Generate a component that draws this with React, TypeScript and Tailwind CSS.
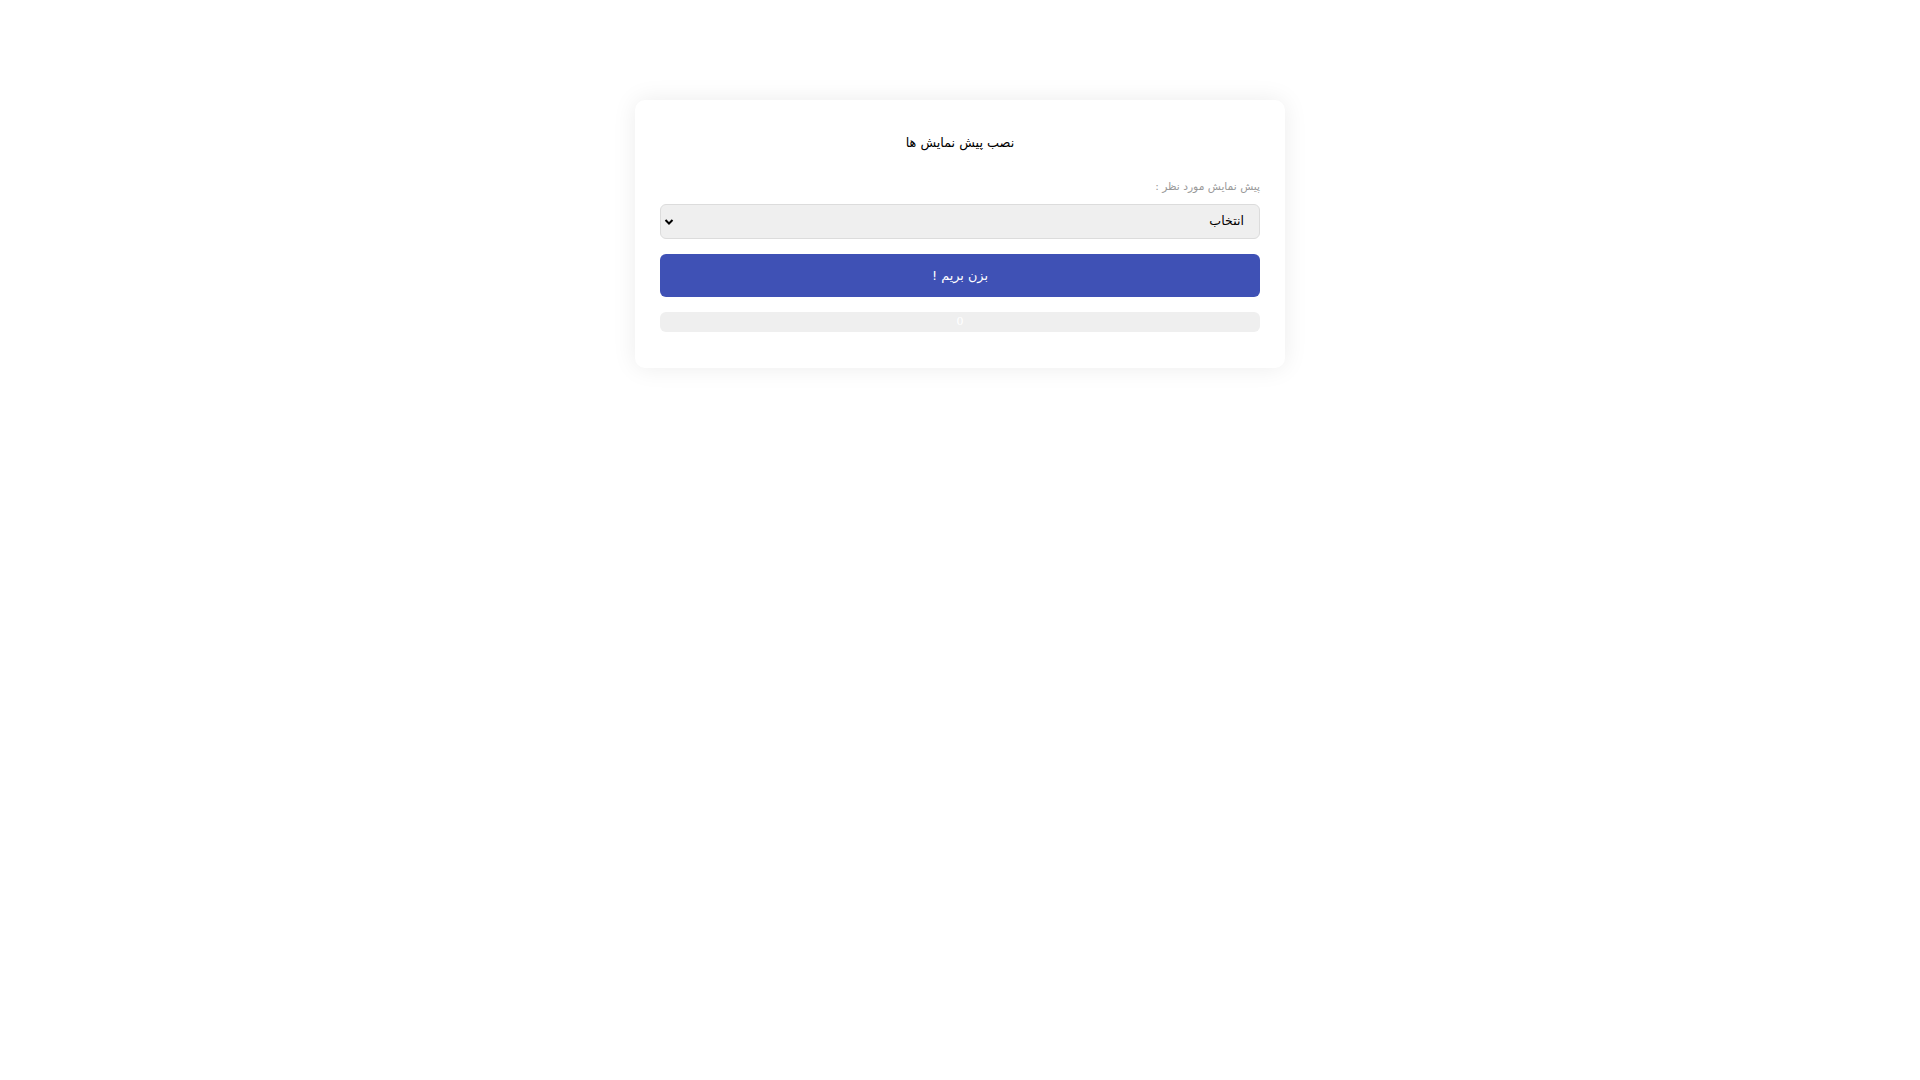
import { useState } from "react";

export default function App() {
  const [value, setValue] = useState("");
  const [progress] = useState(0);

  return (
    <main dir="rtl" className="min-h-screen bg-white pt-[100px] font-['DejaVu_Sans',sans-serif]">
      <div className="mx-auto w-[650px] rounded-[10px] bg-white px-[25px] pb-[36px] pt-[33px] shadow-[0_0_24px_rgba(0,0,0,0.08)]">
        <h1 className="text-center text-[12.8px] font-normal leading-[20px] text-black">نصب پیش نمایش ها</h1>

        <label htmlFor="preview" className="mt-[25px] block text-[10.7px] leading-[18px] text-[#999]">
          پیش نمایش مورد نظر :
        </label>
        <div className="relative mt-[8px]">
          <select
            id="preview"
            value={value}
            onChange={(e) => setValue(e.target.value)}
            className="h-[35px] w-full appearance-none rounded-md border border-[#dcdcdc] bg-[#efefef] pl-6 pr-[15px] text-[12.6px] text-black outline-none"
          >
            <option value="">انتخاب</option>
          </select>
          <svg
            className="pointer-events-none absolute left-[4px] top-1/2 -translate-y-1/2"
            width="10"
            height="8"
            viewBox="0 0 10 8"
            aria-hidden="true"
          >
            <path d="M1.5 2 L5 5.5 L8.5 2" fill="none" stroke="#000" strokeWidth="2" />
          </svg>
        </div>

        <button
          type="button"
          className="mt-[15px] h-[43px] w-full rounded-md bg-[#3f51b5] text-[12.8px] text-white"
        >
          بزن بریم !
        </button>

        <div className="mt-[15px] h-[20px] w-full rounded-md bg-[#efefef] text-center font-['DejaVu_Serif',serif] text-[11px] leading-[20px] text-white">
          {progress}
        </div>
      </div>
    </main>
  );
}
